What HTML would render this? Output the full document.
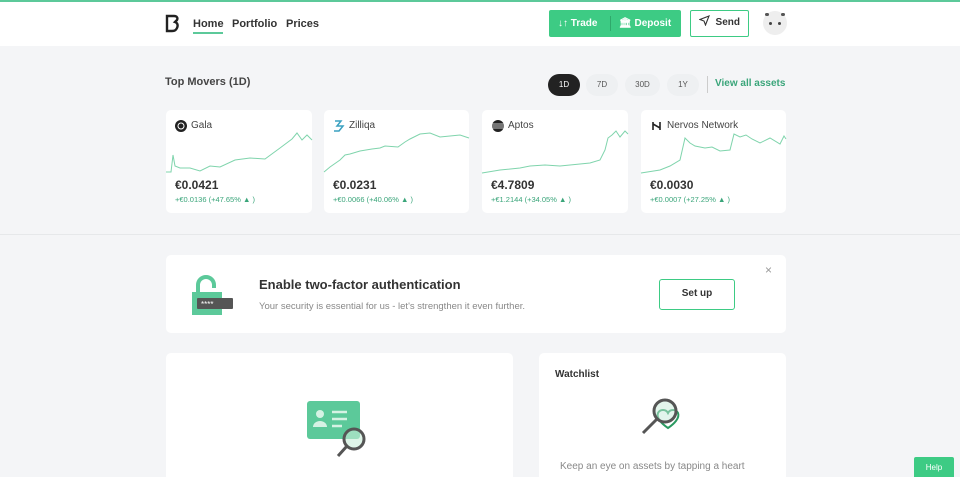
<!DOCTYPE html>
<html><head><meta charset="utf-8"><style>
*{margin:0;padding:0;box-sizing:border-box}
html,body{width:960px;height:477px;overflow:hidden}
body{background:#f4f5f7;font-family:"Liberation Sans",sans-serif;color:#333;position:relative}
.abs{position:absolute}
.hdr{left:0;top:0;width:960px;height:46px;background:#fff;border-top:2px solid #5cc99a}
.nav{font-size:11px;font-weight:bold;color:#333}
.card{background:#fff;border-radius:5px}
.pill{top:74px;height:22px;border-radius:11px;background:#eef0f2;font-size:8px;color:#555;text-align:center;line-height:22px}
.cn{font-size:10px;color:#444}
.pr{font-size:12px;font-weight:bold;color:#333}
.ch{font-size:7.5px;color:#3aa57a}
</style></head><body>
<div class="abs hdr"></div>
<svg class="abs" style="left:165px;top:14px" width="14" height="19" viewBox="0 0 14 19"><path d="M2 2h7c3 0 4 2 3 4l-2 2c3 1 3 4 2 6-1 2-2 3-5 3H2z" fill="none" stroke="#222" stroke-width="2.4"/></svg>
<div class="abs nav" style="left:193px;top:18px">Home</div>
<div class="abs" style="left:193px;top:32px;width:30px;height:2px;background:#5cc99a"></div>
<div class="abs nav" style="left:232px;top:18px">Portfolio</div>
<div class="abs nav" style="left:286px;top:18px">Prices</div>
<div class="abs" style="left:549px;top:10px;width:132px;height:27px;background:#3dcb84;border-radius:2px;color:#fff;font-size:10px;font-weight:bold">
<span class="abs" style="left:9px;top:8px">↓↑ Trade</span>
<div class="abs" style="left:61px;top:6px;width:1px;height:15px;background:#2fa86b"></div>
<span class="abs" style="left:70px;top:8px">🏛 Deposit</span></div>
<div class="abs" style="left:690px;top:10px;width:59px;height:27px;border:1.5px solid #3dcb84;border-radius:2px;font-size:10px;font-weight:bold;color:#333;line-height:24px;padding-left:8px"><svg width="11" height="11" viewBox="0 0 11 11" style="vertical-align:-1px"><path d="M10 1L1 4.5l4 1.5 1.5 4z" fill="none" stroke="#333" stroke-width="1.1"/></svg> &nbsp;Send</div>
<div class="abs" style="left:763px;top:11px;width:24px;height:24px;border-radius:12px;background:#eee"></div>
<div class="abs" style="left:765px;top:13px;width:4px;height:3px;border-radius:2px;background:#555"></div>
<div class="abs" style="left:781px;top:13px;width:4px;height:3px;border-radius:2px;background:#555"></div>
<div class="abs" style="left:769px;top:22px;width:3px;height:3px;border-radius:2px;background:#444"></div>
<div class="abs" style="left:778px;top:22px;width:3px;height:3px;border-radius:2px;background:#444"></div>
<div class="abs" style="left:165px;top:76px;font-size:11px;font-weight:bold;color:#444">Top Movers (1D)</div>
<div class="abs pill" style="left:548px;width:32px;background:#222;color:#fff">1D</div>
<div class="abs pill" style="left:586px;width:32px">7D</div>
<div class="abs pill" style="left:625px;width:35px">30D</div>
<div class="abs pill" style="left:667px;width:32px">1Y</div>
<div class="abs" style="left:707px;top:76px;width:1px;height:17px;background:#ccc"></div>
<div class="abs" style="left:715px;top:78px;font-size:10px;font-weight:bold;color:#3aa57a">View all assets</div>

<div class="abs card" style="left:166px;top:110px;width:146px;height:103px"></div>
<div class="abs card" style="left:324px;top:110px;width:145px;height:103px"></div>
<div class="abs card" style="left:482px;top:110px;width:146px;height:103px"></div>
<div class="abs card" style="left:641px;top:110px;width:145px;height:103px"></div>
<svg class="abs" style="left:0;top:0" width="960" height="240">
<g fill="none" stroke="#7fd4ac" stroke-width="1">
<polyline points="166,172 171,172 173,155 175,166 180,168 190,168 200,171 210,166 220,167 235,160 250,158 265,159 280,148 292,139 297,133 302,140 307,135 312,140"/>
<polyline points="324,172 330,167 340,160 345,155 350,154 360,151 372,149 380,148 385,146 398,147 405,142 410,139 420,134 430,133 440,137 450,136 460,135 469,138"/>
<polyline points="482,173 500,170 520,168 530,166 545,165 560,166 580,164 590,163 600,160 605,150 608,138 612,135 616,131 620,137 625,131 628,134"/>
<polyline points="641,173 660,170 670,166 680,160 685,138 690,143 695,146 705,148 712,147 720,151 730,150 734,134 740,137 746,135 752,139 760,143 770,138 780,144 784,136 786,139"/>
</g>
<circle cx="181" cy="126" r="6" fill="#222"/><circle cx="181" cy="126" r="3" fill="none" stroke="#fff" stroke-width="1"/>
<path d="M335 121h6l-4 5h6l-4 5h-5" fill="none" stroke="#3aa0c0" stroke-width="1.5"/>
<circle cx="498" cy="126" r="6" fill="#222"/><path d="M492 124h12M492 126h12M492 128h12" stroke="#fff" stroke-width="0.8"/>
<path d="M653 122v8M660 122v8M653 124l7 4" stroke="#222" stroke-width="1.6"/>
</svg>
<div class="abs cn" style="left:191px;top:120px">Gala</div>
<div class="abs cn" style="left:349px;top:120px">Zilliqa</div>
<div class="abs cn" style="left:508px;top:120px">Aptos</div>
<div class="abs cn" style="left:667px;top:120px">Nervos Network</div>
<div class="abs pr" style="left:175px;top:178px">€0.0421</div>
<div class="abs pr" style="left:333px;top:178px">€0.0231</div>
<div class="abs pr" style="left:491px;top:178px">€4.7809</div>
<div class="abs pr" style="left:650px;top:178px">€0.0030</div>
<div class="abs ch" style="left:175px;top:195px">+€0.0136 (+47.65% ▲ )</div>
<div class="abs ch" style="left:333px;top:195px">+€0.0066 (+40.06% ▲ )</div>
<div class="abs ch" style="left:491px;top:195px">+€1.2144 (+34.05% ▲ )</div>
<div class="abs ch" style="left:650px;top:195px">+€0.0007 (+27.25% ▲ )</div>
<div class="abs" style="left:0;top:234px;width:960px;height:1px;background:#e6e8ea"></div>

<div class="abs card" style="left:166px;top:255px;width:620px;height:78px"></div>
<svg class="abs" style="left:190px;top:274px" width="45" height="42"><path d="M8 20V11a8 8 0 0 1 16 0v3" fill="none" stroke="#5cc99a" stroke-width="4"/><rect x="2" y="18" width="30" height="23" fill="#5cc99a"/><rect x="7" y="24" width="36" height="11" rx="1" fill="#555"/><text x="11" y="33" font-size="8" fill="#fff" font-family="Liberation Sans">****</text></svg>
<div class="abs" style="left:259px;top:277px;font-size:13px;font-weight:bold;color:#333">Enable two-factor authentication</div>
<div class="abs" style="left:259px;top:301px;font-size:9.5px;color:#888">Your security is essential for us - let's strengthen it even further.</div>
<div class="abs" style="left:659px;top:279px;width:76px;height:31px;border:1.5px solid #3dcb84;border-radius:3px;font-size:10px;font-weight:bold;text-align:center;line-height:28px">Set up</div>
<div class="abs" style="left:765px;top:263px;font-size:12px;color:#999">×</div>

<div class="abs card" style="left:166px;top:353px;width:347px;height:130px"></div>
<div class="abs card" style="left:539px;top:353px;width:247px;height:130px"></div>
<svg class="abs" style="left:305px;top:400px" width="66" height="62"><rect x="2" y="1" width="53" height="38" rx="3" fill="#5cc99a"/><circle cx="15" cy="14" r="4" fill="#d6f2e4"/><path d="M8 27a7 6 0 0 1 14 0z" fill="#d6f2e4"/><path d="M27 12h15M27 19h15M27 26h10" stroke="#d6f2e4" stroke-width="2.5"/><circle cx="49" cy="39" r="10" fill="#c8ecd9" fill-opacity=".6" stroke="#555" stroke-width="3"/><path d="M42 46l-9 10" stroke="#555" stroke-width="3"/></svg>
<div class="abs" style="left:555px;top:369px;font-size:10px;font-weight:bold;color:#333">Watchlist</div>
<svg class="abs" style="left:640px;top:395px" width="50" height="45"><path d="M18 18c2-4 8-4 10 0 2-4 8-4 10 0 2 5-4 11-10 15-6-4-12-10-10-15z" fill="none" stroke="#2a9960" stroke-width="2"/><circle cx="25" cy="16" r="11" fill="#c8ecd9" fill-opacity=".5" stroke="#555" stroke-width="3"/><path d="M17 24l-14 14" stroke="#555" stroke-width="3"/></svg>
<div class="abs" style="left:560px;top:461px;font-size:10px;color:#888">Keep an eye on assets by tapping a heart</div>
<div class="abs" style="left:914px;top:457px;width:40px;height:20px;background:#3dcb84;color:#fff;font-size:8px;text-align:center;line-height:22px;border-radius:2px 2px 0 0">Help</div>
</body></html>
